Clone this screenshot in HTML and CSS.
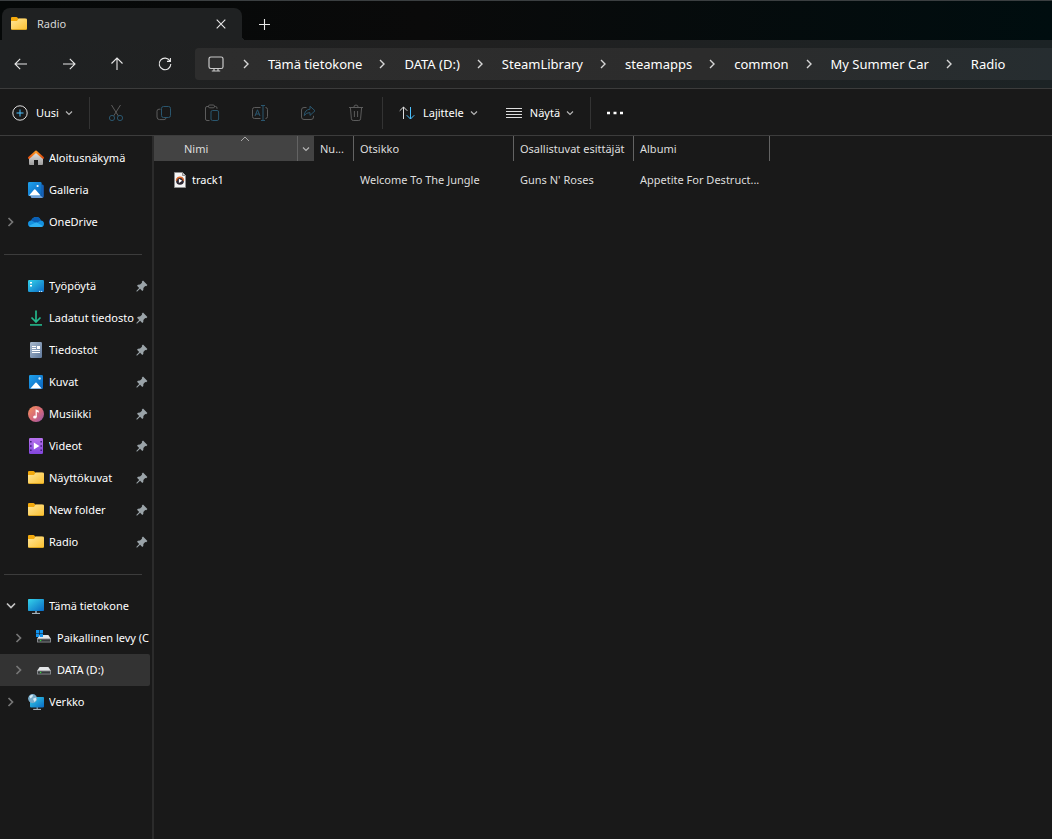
FILE: index.html
```html
<!DOCTYPE html>
<html lang="fi">
<head>
    <meta charset="UTF-8">
    <meta name="viewport" content="width=device-width, initial-scale=1.0">
    <title>Radio</title>
    <link rel="stylesheet" href="styles.css">
</head>
<body>
    <!-- Shared icons -->
    <svg class="sprite" width="0" height="0" aria-hidden="true">
        <defs>
            <linearGradient id="gFolder" x1="0" y1="0" x2="1" y2="1"><stop offset="0" stop-color="#ffe79a"/><stop offset="1" stop-color="#fbc02f"/></linearGradient>
            <linearGradient id="gBlue" x1="0" y1="0" x2="1" y2="1"><stop offset="0" stop-color="#1fa2ec"/><stop offset="1" stop-color="#0b63bd"/></linearGradient>
            <linearGradient id="gCyan" x1="0" y1="0" x2="1" y2="1"><stop offset="0" stop-color="#35d3ea"/><stop offset="1" stop-color="#0a6ac4"/></linearGradient>
            <linearGradient id="gHouse" x1="0" y1="0" x2="0" y2="1"><stop offset="0" stop-color="#e6e6e6"/><stop offset="1" stop-color="#9d9d9d"/></linearGradient>
            <linearGradient id="gRoof" x1="0" y1="0" x2="1" y2="0"><stop offset="0" stop-color="#e5530f"/><stop offset=".5" stop-color="#fb9b28"/><stop offset="1" stop-color="#d9470b"/></linearGradient>
            <linearGradient id="gDoc" x1="0" y1="0" x2="1" y2="1"><stop offset="0" stop-color="#a9bace"/><stop offset="1" stop-color="#60799c"/></linearGradient>
            <linearGradient id="gMusic" x1="0" y1="0" x2="1" y2="1"><stop offset="0" stop-color="#f6915a"/><stop offset=".55" stop-color="#d4687a"/><stop offset="1" stop-color="#9353ae"/></linearGradient>
            <linearGradient id="gVideo" x1="0" y1="0" x2="0" y2="1"><stop offset="0" stop-color="#b872ee"/><stop offset="1" stop-color="#8245dc"/></linearGradient>
            <linearGradient id="gDown" x1="0" y1="0" x2="0" y2="1"><stop offset="0" stop-color="#35d18c"/><stop offset="1" stop-color="#119e8c"/></linearGradient>
        </defs>
        <symbol id="folder" viewBox="0 0 16 16">
            <path d="M0 8V2.1Q0 1 1.1 1H5.4Q6 1 6.4 1.5L7.4 2.7H14V8z" fill="#f3a90c"/>
            <path d="M0 5.1H6L7.6 2.5H14.8Q16 2.5 16 3.7V12.5Q16 13.8 14.8 13.8H1.2Q0 13.8 0 12.5z" fill="url(#gFolder)"/>
            <path d="M.6 13.5H15.4" stroke="#e2a71c" stroke-width=".8"/>
        </symbol>
        <symbol id="home" viewBox="0 0 16 16">
            <path d="M1 7.5L8 1.8L15 7.5V14Q15 15 14 15H10V10H6V15H2Q1 15 1 14z" fill="url(#gHouse)"/>
            <path d="M1 7.8L8 1.6L15 7.8" fill="none" stroke="url(#gRoof)" stroke-width="2.1" stroke-linecap="round" stroke-linejoin="round"/>
        </symbol>
        <symbol id="gallery" viewBox="0 0 16 16">
            <path d="M3 14.2H13.2V2.6H14.4Q15.8 3 15.8 4V14.2Q15.8 15.8 14.2 15.8H4.2Q3 15.8 2.6 14.6z" fill="#1761b8"/>
            <path d="M2.5 14.2H13L15 15.8H4Q3 15.8 2.5 14.2z" fill="#8dbcee"/>
            <rect width="13.6" height="14" rx="1.2" fill="url(#gBlue)"/>
            <path d="M1 13.4L6.2 7.6Q6.8 7 7.4 7.6L12.6 13.4z" fill="#fff"/>
            <circle cx="9.6" cy="4" r="1.1" fill="#fff"/>
        </symbol>
        <symbol id="cloud" viewBox="0 0 16 16">
            <path d="M3.5 13Q0 13 0 9.8Q0 6.8 3.2 6.6Q4.6 3 8.2 3Q11.6 3 12.8 6.4Q16 6.8 16 9.7Q16 13 12.7 13z" fill="#1490df"/>
            <path d="M3.2 6.6Q4.6 3 8.2 3Q11.6 3 12.8 6.4L8.4 9z" fill="#0a5fb5"/>
            <path d="M.9 11.8L8.4 8.2L14.9 12Q14.2 13 12.7 13H3.5Q1.8 13 .9 11.8z" fill="#2fb0f2"/>
        </symbol>
        <symbol id="desktop" viewBox="0 0 16 16">
            <rect y="2" width="16" height="12" rx="1.2" fill="url(#gCyan)"/>
            <path d="M2 4H4V5.6H2zM2 7H4V8.6H2z" fill="#fff"/>
            <path d="M11 13.4H12.2M13 13.4H14.2" stroke="#d9f3ff"/>
        </symbol>
        <symbol id="download" viewBox="0 0 16 16">
            <path d="M8 .5V11.5M3.5 7.5L8 12L12.5 7.5" fill="none" stroke="#24b88c" stroke-width="1.7"/>
            <path d="M2 14.2H14V15.8H2z" fill="url(#gDown)"/>
        </symbol>
        <symbol id="document" viewBox="0 0 16 16">
            <rect x="2" width="12" height="16" rx="1.2" fill="url(#gDoc)"/>
            <path d="M4 4.5H8M4 6.5H8M4 8.5H12M4 10.5H12" stroke="#fff"/>
            <rect x="9" y="4" width="3" height="3" fill="#fff"/>
        </symbol>
        <symbol id="picture" viewBox="0 0 16 16">
            <rect x="1" y="1" width="14" height="14" rx="1.2" fill="url(#gBlue)"/>
            <path d="M2.4 14.4L7.4 8.8Q8 8.2 8.6 8.8L13.6 14.4z" fill="#fff"/>
            <circle cx="11.6" cy="4.5" r="1.2" fill="#d7efff"/>
        </symbol>
        <symbol id="music" viewBox="0 0 16 16">
            <circle cx="8" cy="8" r="8" fill="url(#gMusic)"/>
            <ellipse cx="6.9" cy="11" rx="1.8" ry="1.6" fill="#fff"/>
            <path d="M7.6 11V3.2L10.8 4.8V6.8L8.8 5.8V11z" fill="#fff"/>
        </symbol>
        <symbol id="video" viewBox="0 0 16 16">
            <rect x="1" width="14" height="16" rx="1.2" fill="url(#gVideo)"/>
            <path d="M2 3H3.6V4.5H2zM2 7.2H3.6V8.7H2zM2 11.5H3.6V13H2zM12.4 3H14V4.5H12.4zM12.4 7.2H14V8.7H12.4zM12.4 11.5H14V13H12.4z" fill="#40207c"/>
            <path d="M5.8 4.6L11.4 8L5.8 11.4z" fill="#fff"/>
        </symbol>
        <symbol id="computer" viewBox="0 0 16 16">
            <path d="M7 12H9V15H7z" fill="#7b8c98"/>
            <path d="M4 15.4H12" stroke="#b6c3cc"/>
            <rect y="1" width="16" height="12" rx=".8" fill="url(#gCyan)"/>
        </symbol>
        <symbol id="drive" viewBox="0 0 16 16">
            <path d="M1 9L3.6 5H12.4L15 9z" fill="#e4e6e8"/>
            <rect x="1" y="8.4" width="14" height="4.2" rx=".6" fill="#85888c"/>
            <rect x="2" y="9.4" width="12" height="2.2" fill="#35383b"/>
            <circle cx="4.6" cy="10.5" r=".8" fill="#35d43f"/>
        </symbol>
        <symbol id="windrive" viewBox="0 0 16 16">
            <path d="M1 9L3.6 5H12.4L15 9z" fill="#e4e6e8"/>
            <rect x="1" y="8.4" width="14" height="4.2" rx=".6" fill="#85888c"/>
            <rect x="2" y="9.4" width="12" height="2.2" fill="#35383b"/>
            <circle cx="4.6" cy="10.5" r=".8" fill="#35d43f"/>
            <path d="M0 0H3.2V3.2H0zM3.8 0H7V3.2H3.8zM0 3.8H3.2V7H0zM3.8 3.8H7V7H3.8z" fill="#1294ef"/>
        </symbol>
        <symbol id="network" viewBox="0 0 16 16">
            <path d="M8.5 12H10V15H8.5z" fill="#7b8c98"/>
            <path d="M5.2 15.4H13" stroke="#b6c3cc"/>
            <rect x="2" y="3" width="14" height="10.4" rx=".8" fill="url(#gCyan)"/>
            <circle cx="4.6" cy="4.6" r="4.5" fill="#79acca"/>
            <path d="M1.4 2.6Q3 .4 5 1L4.4 3L2.4 4.4zM5 4.8L7.8 3.4L8.4 6L6.4 8z" fill="#d4ebf5"/>
        </symbol>
        <symbol id="media" viewBox="0 0 16 16">
            <path d="M2.5.5H10.5L13.5 3.5V15.5H2.5z" fill="#f5f5f5" stroke="#8d8d8d"/>
            <path d="M10.5.5V3.5H13.5" fill="#c9c9c9" stroke="#8d8d8d"/>
            <circle cx="8" cy="8.8" r="3.9" fill="#2b2530"/>
            <path d="M4.4 8.8A3.6 3.6 0 0 1 11.6 8.8" fill="none" stroke="#e36a2a" stroke-width="1.4"/>
            <path d="M6.9 6.7L10.2 8.8L6.9 10.9z" fill="#fff"/>
        </symbol>
        <symbol id="pin" viewBox="0 0 12 12">
            <path d="M7 .6L11.4 5L10.2 6.3L9.2 6L7.4 8L7.3 10L6.3 11L4.1 8.8L1.2 11.5L.4 11.6L.5 10.8L3.2 7.9L1 5.7L2 4.7L4 4.6L6 2.8L5.8 1.8z" fill="#9aa3a8"/>
        </symbol>
        <symbol id="right" viewBox="0 0 8 10">
            <path d="M2 1L6 5L2 9" fill="none" stroke="currentColor" stroke-width="1.4"/>
        </symbol>
        <symbol id="branch" viewBox="0 0 8 10">
            <path d="M1.5 1L5.5 5L1.5 9" fill="none" stroke="currentColor" stroke-width="1.7"/>
        </symbol>
        <symbol id="down" viewBox="0 0 8 8">
            <path d="M1 2.5L4 5.5L7 2.5" fill="none" stroke="currentColor" stroke-width="1.2"/>
        </symbol>
    </svg>

    <div class="window">
        <header class="titlebar">
            <div class="tab">
                <svg class="icon"><use href="#folder"/></svg>
                <span class="tab-title">Radio</span>
                <button class="tab-close" aria-label="Sulje välilehti">
                    <svg width="10" height="10" viewBox="0 0 10 10"><path d="M.7.7L9.3 9.3M9.3.7L.7 9.3"/></svg>
                </button>
            </div>
            <button class="tab-new" aria-label="Uusi välilehti">
                <svg width="11" height="11" viewBox="0 0 11 11"><path d="M5.5 0V11M0 5.5H11"/></svg>
            </button>
        </header>

        <nav class="navbar">
            <button class="nav-button" aria-label="Takaisin">
                <svg width="16" height="16" viewBox="0 0 16 16"><path d="M14 8H2M7.2 2.8L2 8L7.2 13.2"/></svg>
            </button>
            <button class="nav-button" aria-label="Eteenpäin">
                <svg width="16" height="16" viewBox="0 0 16 16"><path d="M2 8H14M8.8 2.8L14 8L8.8 13.2"/></svg>
            </button>
            <button class="nav-button" aria-label="Ylös">
                <svg width="16" height="16" viewBox="0 0 16 16"><path d="M8 14V2M2.5 7.5L8 2L13.5 7.5"/></svg>
            </button>
            <button class="nav-button" aria-label="Päivitä">
                <svg width="16" height="16" viewBox="0 0 16 16"><path d="M13 5A5.8 5.8 0 1 0 13.8 8M13.4 2V5.4H10"/></svg>
            </button>
            <div class="address">
                <svg class="address-icon" width="16" height="16" viewBox="0 0 16 16"><rect x="1" y="1" width="14" height="11.5" rx="1.8"/><path d="M6 12.5V15M10 12.5V15M3.8 15H12.2"/></svg>
                <svg class="crumb-arrow"><use href="#right"/></svg>
                <a class="crumb" href="#">Tämä tietokone</a>
                <svg class="crumb-arrow"><use href="#right"/></svg>
                <a class="crumb" href="#">DATA (D:)</a>
                <svg class="crumb-arrow"><use href="#right"/></svg>
                <a class="crumb" href="#">SteamLibrary</a>
                <svg class="crumb-arrow"><use href="#right"/></svg>
                <a class="crumb" href="#">steamapps</a>
                <svg class="crumb-arrow"><use href="#right"/></svg>
                <a class="crumb" href="#">common</a>
                <svg class="crumb-arrow"><use href="#right"/></svg>
                <a class="crumb" href="#">My Summer Car</a>
                <svg class="crumb-arrow"><use href="#right"/></svg>
                <a class="crumb" href="#">Radio</a>
            </div>
        </nav>

        <div class="toolbar">
            <div class="tool-group">
                <button class="tool">
                    <svg width="16" height="16" viewBox="0 0 16 16"><circle cx="8" cy="8" r="7.2"/><path class="accent" d="M8 4.5V11.5M4.5 8H11.5"/></svg>
                    <span>Uusi</span>
                    <svg class="caret"><use href="#down"/></svg>
                </button>
            </div>
            <div class="tool-group small">
                <button class="tool-icon" disabled aria-label="Leikkaa">
                    <svg width="16" height="18" viewBox="0 0 16 18"><path d="M3.5 1L10.4 12M12.5 1L5.6 12"/><g class="accent"><circle cx="4" cy="14" r="2.6"/><circle cx="12" cy="14" r="2.6"/></g></svg>
                </button>
                <button class="tool-icon" disabled aria-label="Kopioi">
                    <svg width="16" height="16" viewBox="0 0 16 16"><path d="M4.5 4.2H3Q1 4.2 1 6.2V12Q1 14.6 3.6 14.6H8Q10 14.6 10 12.8"/><rect class="accent" x="5.5" y="1.5" width="9" height="11" rx="2"/></svg>
                </button>
                <button class="tool-icon" disabled aria-label="Liitä">
                    <svg width="16" height="18" viewBox="0 0 16 18"><path d="M5 2.5H3Q1.5 2.5 1.5 4V15Q1.5 16.5 3 16.5H5.5M10 2.5H11.5Q13 2.5 13 4V4.8"/><rect x="4.5" y="1" width="6" height="2.8" rx="1.3"/><rect class="accent" x="7" y="6.5" width="7.6" height="10" rx="1.5"/></svg>
                </button>
                <button class="tool-icon" disabled aria-label="Nimeä uudelleen">
                    <svg width="18" height="16" viewBox="0 0 18 16"><path d="M9.5 2.5H3.5Q1.5 2.5 1.5 4.5V11.5Q1.5 13.5 3.5 13.5H9.5M14.5 2.5Q16.5 2.5 16.5 4.5V11.5Q16.5 13.5 14.5 13.5"/><path class="accent" d="M4 11L6.5 4.8L9 11M4.8 9H8.2M12 .5V15.5M10 .5H14M10 15.5H14"/></svg>
                </button>
                <button class="tool-icon" disabled aria-label="Jaa">
                    <svg width="16" height="16" viewBox="0 0 16 16"><path d="M6.5 2.5H4Q1.5 2.5 1.5 5V12Q1.5 14.5 4 14.5H11Q13.5 14.5 13.5 12V10.8"/><path class="accent" d="M10 1.2L15 5.8L10 10.4V7.6Q6.4 7.4 4.2 10.6Q4.8 4.6 10 4.2z"/></svg>
                </button>
                <button class="tool-icon" disabled aria-label="Poista">
                    <svg width="16" height="18" viewBox="0 0 16 18"><path d="M1 3.5H15M5.8 3.5Q5.8 1 8 1T10.2 3.5M2.4 3.5L3.4 14.8Q3.6 16.5 5.2 16.5H10.8Q12.4 16.5 12.6 14.8L13.6 3.5M6.4 7V13M9.6 7V13"/></svg>
                </button>
            </div>
            <div class="tool-group wide">
                <button class="tool">
                    <svg width="16" height="16" viewBox="0 0 16 16"><path d="M4.5 14V2M.7 5.8L4.5 2L8.3 5.8"/><path class="accent" d="M11.5 2V14M7.7 10.2L11.5 14L15.3 10.2"/></svg>
                    <span>Lajittele</span>
                    <svg class="caret"><use href="#down"/></svg>
                </button>
                <button class="tool">
                    <svg width="16" height="16" viewBox="0 0 16 16"><path d="M0 3.5H16M0 6.5H16M0 9.5H16M0 12.5H16"/></svg>
                    <span>Näytä</span>
                    <svg class="caret"><use href="#down"/></svg>
                </button>
            </div>
            <button class="tool more" aria-label="Lisää">
                <svg width="16" height="4" viewBox="0 0 16 4"><path class="dots" d="M0 .7H3V3.3H0zM6.5.7H9.5V3.3H6.5zM13 .7H16V3.3H13z"/></svg>
            </button>
        </div>

        <div class="content">
            <aside class="sidebar">
                <ul class="tree">
                    <li><span class="expander"></span><a href="#"><svg class="icon"><use href="#home"/></svg><span class="label">Aloitusnäkymä</span></a></li>
                    <li><span class="expander"></span><a href="#"><svg class="icon"><use href="#gallery"/></svg><span class="label">Galleria</span></a></li>
                    <li><button class="expander" aria-label="Laajenna"><svg><use href="#branch"/></svg></button><a href="#"><svg class="icon"><use href="#cloud"/></svg><span class="label">OneDrive</span></a></li>
                </ul>
                <hr>
                <ul class="tree">
                    <li><span class="expander"></span><a href="#"><svg class="icon"><use href="#desktop"/></svg><span class="label">Työpöytä</span><svg class="pin"><use href="#pin"/></svg></a></li>
                    <li><span class="expander"></span><a href="#"><svg class="icon"><use href="#download"/></svg><span class="label">Ladatut tiedosto</span><svg class="pin"><use href="#pin"/></svg></a></li>
                    <li><span class="expander"></span><a href="#"><svg class="icon"><use href="#document"/></svg><span class="label">Tiedostot</span><svg class="pin"><use href="#pin"/></svg></a></li>
                    <li><span class="expander"></span><a href="#"><svg class="icon"><use href="#picture"/></svg><span class="label">Kuvat</span><svg class="pin"><use href="#pin"/></svg></a></li>
                    <li><span class="expander"></span><a href="#"><svg class="icon"><use href="#music"/></svg><span class="label">Musiikki</span><svg class="pin"><use href="#pin"/></svg></a></li>
                    <li><span class="expander"></span><a href="#"><svg class="icon"><use href="#video"/></svg><span class="label">Videot</span><svg class="pin"><use href="#pin"/></svg></a></li>
                    <li><span class="expander"></span><a href="#"><svg class="icon"><use href="#folder"/></svg><span class="label">Näyttökuvat</span><svg class="pin"><use href="#pin"/></svg></a></li>
                    <li><span class="expander"></span><a href="#"><svg class="icon"><use href="#folder"/></svg><span class="label">New folder</span><svg class="pin"><use href="#pin"/></svg></a></li>
                    <li><span class="expander"></span><a href="#"><svg class="icon"><use href="#folder"/></svg><span class="label">Radio</span><svg class="pin"><use href="#pin"/></svg></a></li>
                </ul>
                <hr>
                <ul class="tree">
                    <li><button class="expander open" aria-label="Tiivistä"><svg><use href="#branch"/></svg></button><a href="#"><svg class="icon"><use href="#computer"/></svg><span class="label">Tämä tietokone</span></a></li>
                    <li class="nested"><button class="expander" aria-label="Laajenna"><svg><use href="#branch"/></svg></button><a href="#"><svg class="icon"><use href="#windrive"/></svg><span class="label">Paikallinen levy (C</span></a></li>
                    <li class="nested selected"><button class="expander" aria-label="Laajenna"><svg><use href="#branch"/></svg></button><a href="#"><svg class="icon"><use href="#drive"/></svg><span class="label">DATA (D:)</span></a></li>
                    <li><button class="expander" aria-label="Laajenna"><svg><use href="#branch"/></svg></button><a href="#"><svg class="icon"><use href="#network"/></svg><span class="label">Verkko</span></a></li>
                </ul>
            </aside>

            <main class="files">
                <table>
                    <colgroup>
                        <col class="col-name"><col class="col-number"><col class="col-title"><col class="col-artist"><col class="col-album">
                    </colgroup>
                    <thead>
                        <tr>
                            <th class="sorted">
                                <div class="sort-head">
                                    <span>Nimi</span>
                                    <svg class="sort-mark" width="10" height="6" viewBox="0 0 10 6"><path d="M1 5L5 1L9 5"/></svg>
                                    <button class="filter" aria-label="Suodata"><svg class="caret"><use href="#down"/></svg></button>
                                </div>
                            </th>
                            <th>Nu...</th>
                            <th>Otsikko</th>
                            <th>Osallistuvat esittäjät</th>
                            <th>Albumi</th>
                        </tr>
                    </thead>
                    <tbody>
                        <tr>
                            <td><a class="file" href="#"><svg class="icon"><use href="#media"/></svg>track1</a></td>
                            <td></td>
                            <td>Welcome To The Jungle</td>
                            <td>Guns N' Roses</td>
                            <td>Appetite For Destruct...</td>
                        </tr>
                    </tbody>
                </table>
            </main>
        </div>
    </div>
</body>
</html>
```
FILE: styles.css
```css
* {
    box-sizing: border-box;
}
body {
    margin: 0;
    background: #191919;
    color: #fff;
    font-family: 'Segoe UI', 'Noto Sans', 'Open Sans', sans-serif;
    font-size: 11px;
    line-height: 16px;
}
a {
    color: inherit;
    text-decoration: none;
}
button {
    background: none;
    border: none;
    padding: 0;
    margin: 0;
    color: inherit;
    font: inherit;
    display: flex;
    align-items: center;
    justify-content: center;
}
svg {
    display: block;
    flex: none;
}
.sprite {
    position: absolute;
}
.icon {
    width: 16px;
    height: 16px;
}
.caret {
    width: 8px;
    height: 8px;
    color: #b5b5b5;
}
.window {
    display: flex;
    flex-direction: column;
    min-height: 100vh;
}

/* Tabs */
.titlebar {
    display: flex;
    align-items: flex-end;
    height: 40px;
    padding-left: 2px;
    border-top: 1px solid #3b3f41;
    background: linear-gradient(90deg, #050808, #0a0a0a 40%, #000d0f);
}
.tab {
    display: flex;
    align-items: center;
    position: relative;
    width: 240px;
    height: 32px;
    padding: 0 11px 0 9px;
    background: #1f2122;
    border-radius: 8px 8px 0 0;
}
/* flared foot of the active tab */
.tab::after {
    content: '';
    position: absolute;
    left: 100%;
    bottom: 0;
    width: 4px;
    height: 4px;
    background: radial-gradient(circle at 100% 0, transparent 4px, #1f2122 4px);
}
.tab-title {
    flex: 1;
    margin-left: 10px;
    color: #d6d6d6;
}
.tab-close,
.tab-new {
    width: 20px;
    height: 32px;
}
.tab-new {
    margin-left: 12px;
}
.tab-close svg,
.tab-new svg,
.nav-button svg {
    fill: none;
    stroke: #e8e8e8;
    stroke-width: 1.1;
}

/* Navigation and address */
.navbar {
    display: flex;
    align-items: center;
    height: 49px;
    padding-left: 1px;
    background: linear-gradient(90deg, #1f2122, #202020 45%, #1c2325);
    border-bottom: 1px solid #3c3c3c;
}
.nav-button {
    width: 40px;
    height: 32px;
    margin-right: 8px;
}
.address {
    display: flex;
    flex: 1;
    align-items: center;
    height: 32px;
    margin-left: 2px;
    padding-left: 13px;
    background: linear-gradient(90deg, #2d2d2d, #2c2c2c 60%, #262d30);
    border-radius: 4px 0 0 4px;
    font-size: 13px;
    white-space: nowrap;
}
.address-icon {
    fill: none;
    stroke: #c9c9c9;
    stroke-width: 1.2;
    margin-right: 2px;
}
.crumb-arrow {
    width: 8px;
    height: 10px;
    margin: 0 18px 0 16px;
    color: #d6d6d6;
}

/* Commands */
.toolbar {
    display: flex;
    align-items: center;
    height: 47px;
    padding-top: 1px;
    border-bottom: 1px solid #3c3c3c;
}
.tool-group {
    display: flex;
    align-items: center;
    gap: 28px;
    height: 32px;
    padding: 0 16px 0 12px;
    border-right: 1px solid #333;
}
.tool-group.small {
    gap: 0;
    padding: 0 2px;
}
.tool-group.wide {
    padding-left: 16px;
}
.tool {
    gap: 8px;
    height: 32px;
}
.tool .caret {
    margin-left: -2px;
}
.tool svg,
.tool-icon svg {
    fill: none;
    stroke: #dedede;
}
.tool .accent {
    stroke: #4cc2ff;
}
.tool .dots {
    fill: #fff;
    stroke: none;
}
.tool.more {
    margin-left: 16px;
}
.tool-icon {
    width: 48px;
    height: 32px;
}
.tool-icon svg {
    stroke: #5c5c5c;
}
.tool-icon .accent {
    stroke: #2a566e;
}

/* Folder tree */
.content {
    display: flex;
    flex: 1;
}
.sidebar {
    flex: none;
    width: 154px;
    padding: 6px 2px 0 0;
    border-right: 2px solid #2b2b2b;
}
.sidebar hr {
    height: 1px;
    margin: 16px 8px 15px 4px;
    border: none;
    background: #3c3c3c;
}
.tree {
    margin: 0;
    padding: 0;
    list-style: none;
}
.tree li {
    display: flex;
    align-items: center;
    height: 32px;
}
.tree a {
    display: flex;
    flex: 1;
    align-items: center;
    min-width: 0;
}
.tree .nested {
    padding-left: 8px;
}
.tree .selected {
    background: #333;
    border-radius: 0 2px 2px 0;
}
.expander {
    flex: none;
    width: 22px;
    height: 32px;
    margin-right: 6px;
    color: #777;
}
.expander svg {
    width: 8px;
    height: 10px;
}
.expander.open {
    color: #c4c4c4;
}
.expander.open svg {
    transform: rotate(90deg);
}
.label {
    flex: 1;
    min-width: 0;
    margin-left: 5px;
    overflow: hidden;
    white-space: nowrap;
}
.pin {
    width: 12px;
    height: 12px;
    margin-right: 2px;
}

/* File list */
.files {
    flex: 1;
    min-width: 0;
}
table {
    width: 616px;
    table-layout: fixed;
    border-collapse: collapse;
    color: #dedede;
}
.col-name,
.col-title {
    width: 160px;
}
.col-number {
    width: 40px;
}
.col-artist {
    width: 120px;
}
.col-album {
    width: 136px;
}
th,
td {
    padding: 0 2px 0 6px;
    overflow: hidden;
    text-align: left;
    text-overflow: ellipsis;
    white-space: nowrap;
    font-weight: normal;
}
th {
    height: 25px;
    background: linear-gradient(#636363, #636363) right / 1px 100% no-repeat;
}
th.sorted {
    padding: 0;
    background: #434343;
}
.sort-head {
    display: flex;
    align-items: center;
    position: relative;
    height: 25px;
    padding-left: 30px;
}
.sort-head span {
    flex: 1;
}
/* sort direction marker sits over the top edge of the heading */
.sort-mark {
    position: absolute;
    top: 0;
    left: 50%;
    margin-left: 6px;
    fill: none;
    stroke: #a8a8a8;
}
.filter {
    width: 17px;
    height: 25px;
    border-left: 1px solid #636363;
}
td {
    height: 38px;
}
td:first-child {
    padding-left: 18px;
}
.file {
    display: flex;
    align-items: center;
    gap: 4px;
    color: #fff;
}
```
